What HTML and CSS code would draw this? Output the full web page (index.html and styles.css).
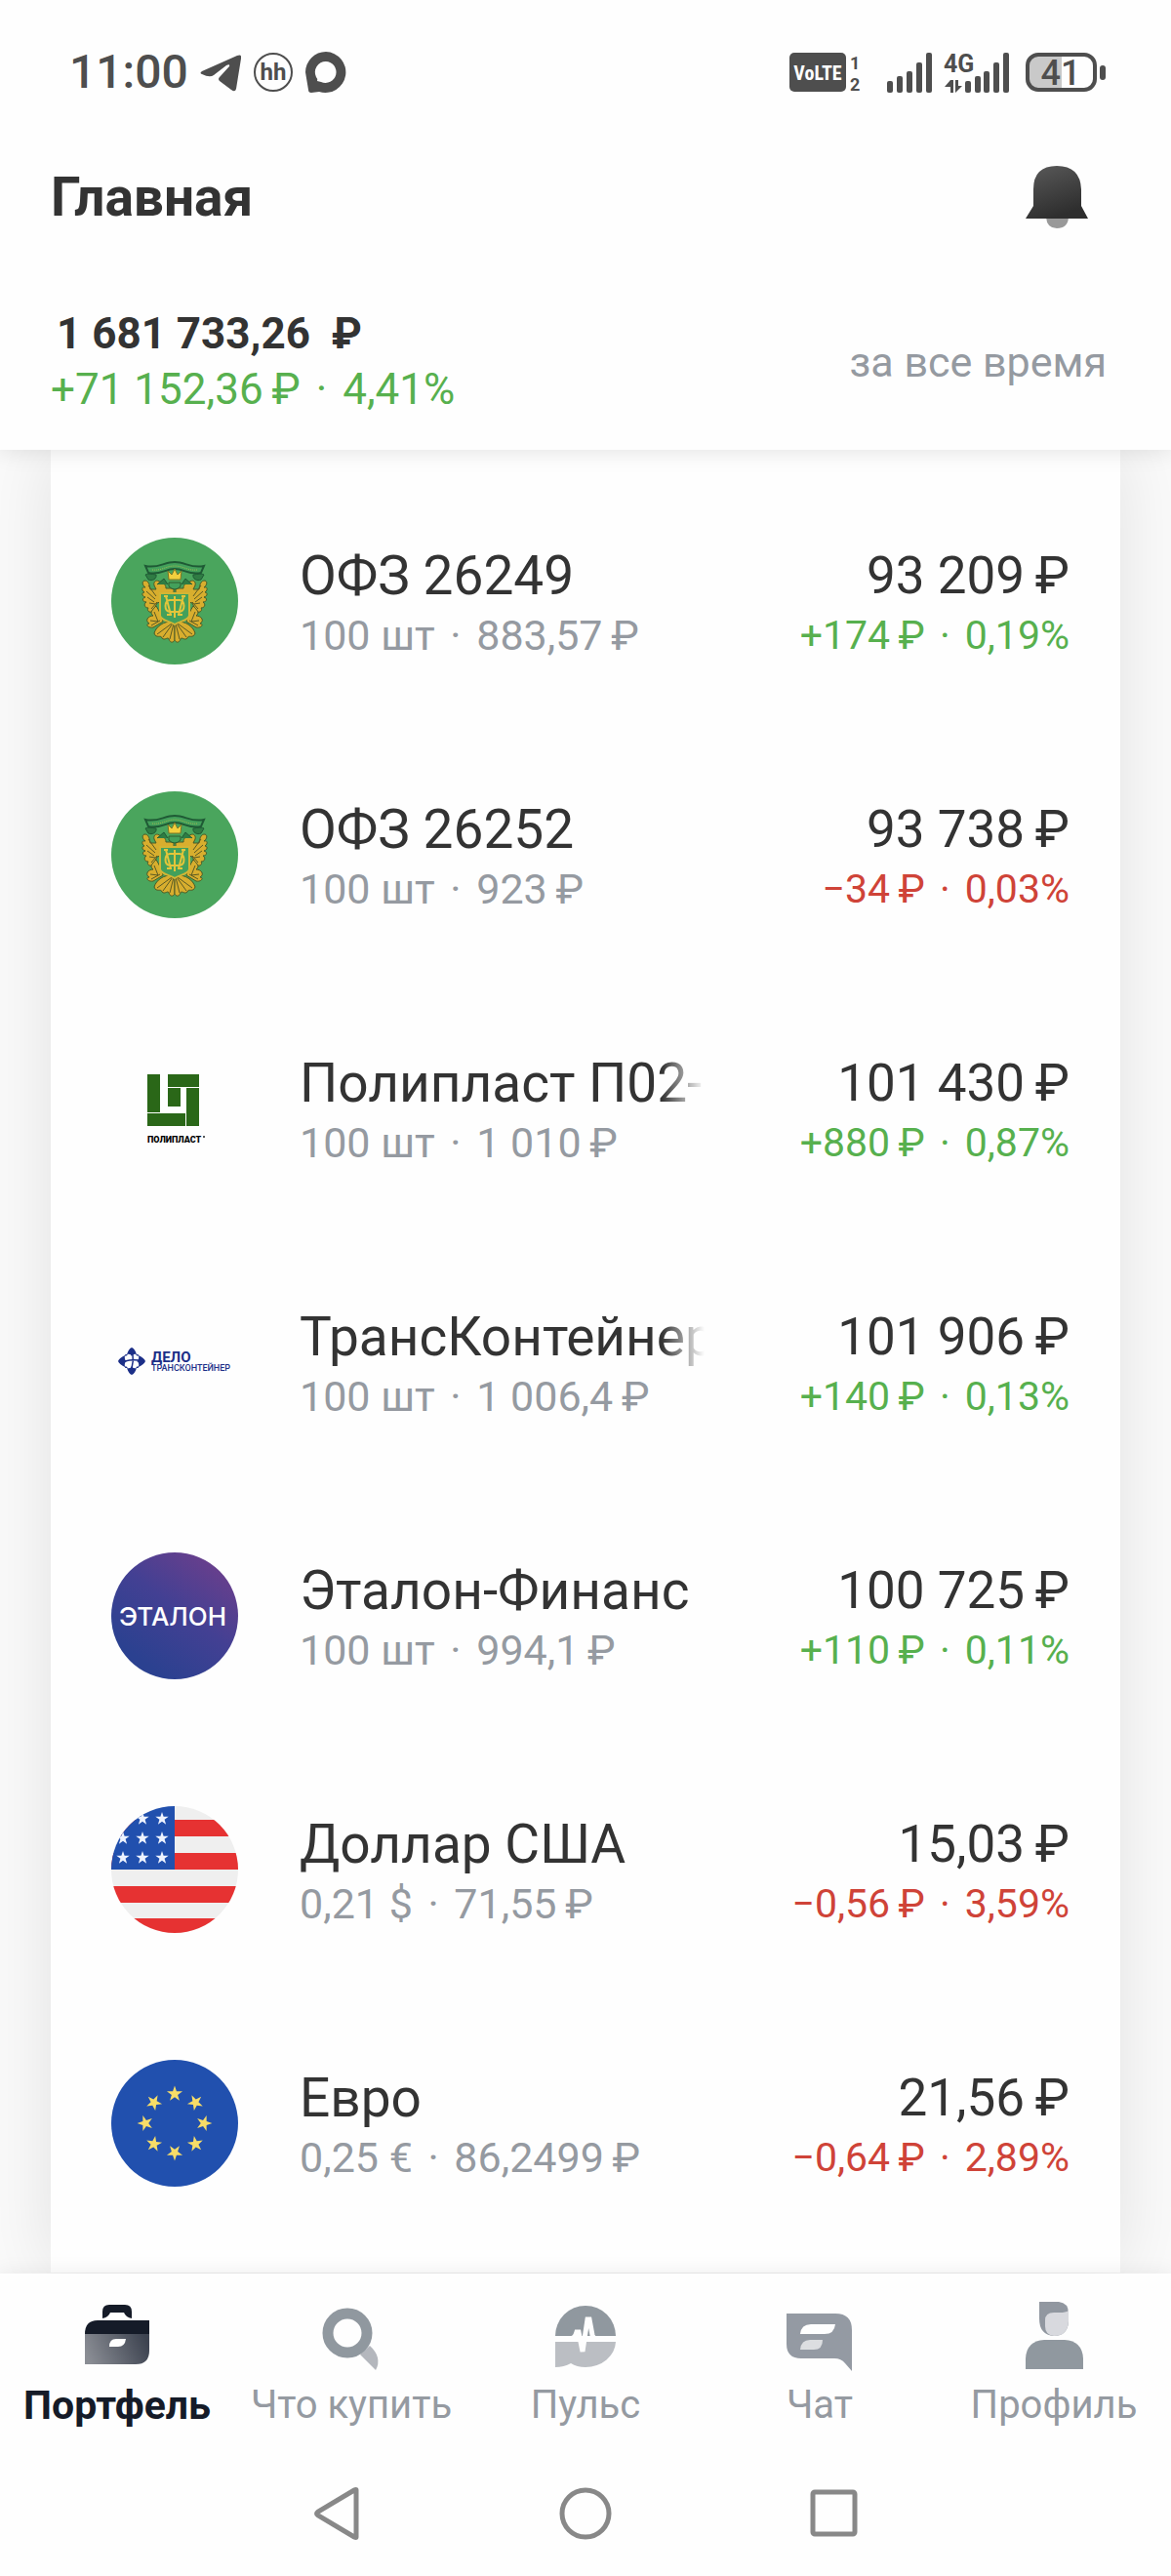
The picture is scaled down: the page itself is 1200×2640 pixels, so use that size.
FILE: index.html
```html
<!DOCTYPE html>
<html lang="ru">
<head>
    <meta charset="UTF-8">
    <meta name="viewport" content="width=device-width, initial-scale=1.0">
    <title>Главная</title>
    <link rel="stylesheet" href="styles.css">
</head>
<body>

    <!-- Общие фигуры для логотипов -->
    <svg class="defs" width="0" height="0" aria-hidden="true">
        <defs>
            <path id="star" d="M0-7 L1.6-2.2 L6.7-2.2 L2.6 0.8 L4.1 5.7 L0 2.7 L-4.1 5.7 L-2.6 0.8 L-6.7-2.2 L-1.6-2.2Z"/>
            <g id="wing">
                <path d="M51 46 C46 42 43 45 44 49 L46 53 L40 53 C39 47 38 44 34 44 C31 45 32 49 35 51 C31 50 31 54 34 56 C31 56 31 60 35 61 C31 62 32 66 36 66 C33 68 34 72 38 72 C36 75 40 78 43 75 L47 67 L50 66 L50 58 L64 57 L64 52 L56 52 C56 48 54 47 51 46Z" fill="#d8ae2e" stroke="#4a5a26" stroke-width="1"/>
                <path d="M38 49 L46 60 M36 55 L45 63 M37 61 L44 66 M39 67 L45 68 M41 73 L47 66" stroke="#5b5a24" stroke-width="1" fill="none"/>
                <path d="M46 70 C42 74 39 77 43 80 C38 80 34 85 39 88 C35 88 37 93 43 92 L53 86 C52 80 49 75 46 70Z" fill="#d8ae2e" stroke="#4a5a26" stroke-width="1"/>
                <path d="M44 76 L48 86 M40 85 L48 86 M41 90 L50 85" stroke="#5b5a24" stroke-width="1" fill="none"/>
                <path d="M64 86 C54 85 46 91 44 98 C46 104 51 99 52 103 C55 106 58 101 59 104 C61 109 64 107 65 105 V86Z" fill="#d8ae2e" stroke="#4a5a26" stroke-width="1"/>
                <path d="M62 88 L47 99 M63 88 L53 102 M64 88 L60 104" stroke="#5b5a24" stroke-width="1" fill="none"/>
                <path d="M35 38 C38 36 44 38 46 38 C47 42 42 45 38 43Z M47 48 L54 42 L58 48" fill="#2f7c43" stroke="#1f5a35" stroke-width="1"/>
            </g>
            <g id="emblem">
                <circle cx="65" cy="65" r="65" fill="#4aa55d"/>
                <use href="#wing"/>
                <use href="#wing" transform="matrix(-1 0 0 1 130 0)"/>
                <path d="M35 29 C48 32 54 25 65 25 C76 25 82 32 95 29 L92 36 C80 39 75 32 65 32 C55 32 50 39 38 36Z" fill="#43a05b" stroke="#1f5a35" stroke-width="2"/>
                <path d="M42 33 C52 34 56 29 65 29 C74 29 78 34 88 33" fill="none" stroke="#9fb850" stroke-width="1" stroke-dasharray="1 1"/>
                <path d="M59 43 L58 34 L62 38 L65 32 L68 38 L72 34 L71 43Z" fill="#f2cf3e" stroke="#7c7424" stroke-width="1"/>
                <path d="M59 46 H71 V50 Q65 56 59 50Z" fill="#43a05b" stroke="#2f5b2c"/>
                <path d="M50 57 H80 V80 C78 86 70 85 65 89 C60 85 52 86 50 80Z" fill="#43a05b" stroke="#d3b534" stroke-width="2"/>
                <path d="M56 60 L61 79 M74 60 L69 79 M54 60 H58 M72 60 H76 M65 60 V82 M60 64 C54 65 54 75 60 76 H70 C76 75 76 65 70 64Z M57 79 H62 M68 79 H73" fill="none" stroke="#e3c53a" stroke-width="2"/>
            </g>
        </defs>
    </svg>

    <header class="header">
        <div class="status">
            <div class="status-left">
                <span class="time">11:00</span>
                <svg width="42" height="42" viewBox="0 0 42 42">
                    <path d="M2 20 L38 4 Q43 2 42 7 L37 38 Q36 42 32 39 L20 30 Q18 28 20 26 L30 15 Q31 12 27 14 L14 24 Q10 27 2 23 Q-1 22 2 20Z" fill="#4e4e4e"/>
                </svg>
                <svg width="42" height="42" viewBox="0 0 42 42">
                    <circle cx="21" cy="21" r="19" fill="none" stroke="#4e4e4e" stroke-width="2"/>
                    <text class="hh" x="21" y="29" text-anchor="middle">hh</text>
                </svg>
                <svg width="42" height="42" viewBox="0 0 42 42">
                    <path d="M21 0 A21 21 0 1 1 14 41 L6 42 Q3 42 3 39 L0 21 A21 21 0 0 1 21 0Z" fill="#4e4e4e"/>
                    <path d="M21 10 A11 11 0 1 1 16 31 L12 30 Q13 28 11 26 A11 11 0 0 1 21 10Z" fill="#fefefe"/>
                </svg>
            </div>
            <svg width="326" height="44" viewBox="0 0 326 44">
                <g fill="#4e4e4e">
                    <rect x="0" y="2" width="58" height="40" rx="5"/>
                    <text class="volte" x="29" y="30" text-anchor="middle">VoLTE</text>
                    <text class="sim" x="62" y="19">1</text>
                    <text class="sim" x="62" y="41">2</text>
                    <rect x="100" y="31" width="6" height="12" rx="2"/>
                    <rect x="110" y="26" width="6" height="17" rx="2"/>
                    <rect x="120" y="21" width="6" height="22" rx="2"/>
                    <rect x="130" y="12" width="6" height="31" rx="2"/>
                    <rect x="140" y="2" width="6" height="41" rx="2"/>
                    <text class="net" x="158" y="22">4G</text>
                    <path d="M165 30 V43 H168 V30Z M165 30 L159 37 H166Z M170 30 V43 L177 36 H173 V30Z"/>
                    <rect x="180" y="31" width="6" height="12" rx="2"/>
                    <rect x="190" y="26" width="6" height="17" rx="2"/>
                    <rect x="199" y="21" width="6" height="22" rx="2"/>
                    <rect x="209" y="12" width="6" height="31" rx="2"/>
                    <rect x="219" y="2" width="6" height="41" rx="2"/>
                    <path d="M254 5 H279 V39 H254 Q245 39 245 30 V14 Q245 5 254 5Z" fill="#c9c9c9"/>
                    <rect x="244" y="4" width="69" height="36" rx="11" fill="none" stroke="#4e4e4e" stroke-width="4"/>
                    <rect x="318" y="15" width="6" height="15" rx="3"/>
                    <text class="charge" x="278" y="35" text-anchor="middle">41</text>
                </g>
            </svg>
        </div>

        <div class="title-row">
            <h1>Главная</h1>
            <button class="bell" type="button" aria-label="Уведомления">
                <svg width="64" height="64" viewBox="0 0 64 64">
                    <defs>
                        <linearGradient id="bellFill" x1="0" y1="0" x2="0.4" y2="1">
                            <stop offset="0" stop-color="#5a5a5a"/>
                            <stop offset="1" stop-color="#2e2e2e"/>
                        </linearGradient>
                    </defs>
                    <path d="M21 53 H44 Q43 64 32 64 Q22 64 21 53Z" fill="#999"/>
                    <path d="M8 24 Q8 0 32 0 Q56 0 57 24 V41 L64 54 H0 L8 41Z" fill="url(#bellFill)"/>
                </svg>
            </button>
        </div>

        <div class="summary">
            <div>
                <p class="total">1 681 733,26 &nbsp;₽</p>
                <p class="total-change up">+71 152,36&thinsp;₽ <span class="dot">·</span> 4,41%</p>
            </div>
            <button class="period" type="button">за все время</button>
        </div>
    </header>

    <main>
        <ul class="assets">
            <li class="asset">
                <svg class="logo" viewBox="0 0 130 130"><use href="#emblem"/></svg>
                <div class="info">
                    <p class="name">ОФЗ 26249</p>
                    <p class="details">100 шт <span class="dot">·</span> 883,57&thinsp;₽</p>
                </div>
                <div class="value">
                    <p class="amount">93 209&thinsp;₽</p>
                    <p class="change up">+174&thinsp;₽ <span class="dot">·</span> 0,19%</p>
                </div>
            </li>
            <li class="asset">
                <svg class="logo" viewBox="0 0 130 130"><use href="#emblem"/></svg>
                <div class="info">
                    <p class="name">ОФЗ 26252</p>
                    <p class="details">100 шт <span class="dot">·</span> 923&thinsp;₽</p>
                </div>
                <div class="value">
                    <p class="amount">93 738&thinsp;₽</p>
                    <p class="change down">−34&thinsp;₽ <span class="dot">·</span> 0,03%</p>
                </div>
            </li>
            <li class="asset">
                <svg class="logo" viewBox="0 0 130 130">
                    <path d="M37 30 H50 V69 H37Z M58 30 H90 V43 H58Z M58 44 H71 V63 H58Z M77 44 H90 V83 H77Z M37 70 H76 V83 H37Z" fill="#2a6718"/>
                    <text class="logo-poly" x="37" y="100">ПОЛИПЛАСТ</text>
                    <circle cx="95" cy="94" r="1" fill="#222"/>
                </svg>
                <div class="info">
                    <p class="name long">Полипласт П02-Б</p>
                    <p class="details">100 шт <span class="dot">·</span> 1 010&thinsp;₽</p>
                </div>
                <div class="value">
                    <p class="amount">101 430&thinsp;₽</p>
                    <p class="change up">+880&thinsp;₽ <span class="dot">·</span> 0,87%</p>
                </div>
            </li>
            <li class="asset">
                <svg class="logo" viewBox="0 0 130 130">
                    <g transform="translate(21 64)" fill="#1c2f88">
                        <path d="M0-14 Q3-13 5-7 Q1-8 0-5 Q-1-8-5-7 Q-3-13 0-14Z"/>
                        <path d="M0 14 Q3 13 5 7 Q1 8 0 5 Q-1 8-5 7 Q-3 13 0 14Z"/>
                        <path d="M-14 0 Q-13-3-7-6 Q-8-1-5 0 Q-8 1-7 6 Q-13 3-14 0Z"/>
                        <path d="M14 0 Q13-3 7-6 Q8-1 5 0 Q8 1 7 6 Q13 3 14 0Z"/>
                        <path d="M-7-6 Q-5-6-5-7 M7-6 Q5-6 5-7 M-7 6 Q-5 6-5 7 M7 6 Q5 6 5 7 M1-7 Q2 0 0 7 M-7 0 Q0-2 7-1" fill="none" stroke="#1c2f88" stroke-width="1.5"/>
                    </g>
                    <text class="logo-delo" x="41" y="65">ДЕЛО</text>
                    <text class="logo-trans" x="41" y="74">ТРАНСКОНТЕЙНЕР</text>
                </svg>
                <div class="info">
                    <p class="name long">ТрансКонтейнер</p>
                    <p class="details">100 шт <span class="dot">·</span> 1 006,4&thinsp;₽</p>
                </div>
                <div class="value">
                    <p class="amount">101 906&thinsp;₽</p>
                    <p class="change up">+140&thinsp;₽ <span class="dot">·</span> 0,13%</p>
                </div>
            </li>
            <li class="asset">
                <svg class="logo" viewBox="0 0 130 130">
                    <defs>
                        <linearGradient id="etalonFill" x1="0.9" y1="0.1" x2="0.3" y2="0.9">
                            <stop offset="0" stop-color="#6b3f8c"/>
                            <stop offset="0.5" stop-color="#434093"/>
                            <stop offset="1" stop-color="#2b4190"/>
                        </linearGradient>
                    </defs>
                    <circle cx="65" cy="65" r="65" fill="url(#etalonFill)"/>
                    <text class="logo-etalon" x="63" y="75" text-anchor="middle">ЭТАЛОН</text>
                </svg>
                <div class="info">
                    <p class="name">Эталон-Финанс</p>
                    <p class="details">100 шт <span class="dot">·</span> 994,1&thinsp;₽</p>
                </div>
                <div class="value">
                    <p class="amount">100 725&thinsp;₽</p>
                    <p class="change up">+110&thinsp;₽ <span class="dot">·</span> 0,11%</p>
                </div>
            </li>
            <li class="asset">
                <svg class="logo round" viewBox="0 0 130 130">
                    <rect width="130" height="130" fill="#efefef"/>
                    <path d="M0 14 H130 V31 H0Z M0 48 H130 V65 H0Z M0 82 H130 V99 H0Z M0 115 H130 V130 H0Z" fill="#e63232"/>
                    <rect width="65" height="65" fill="#2150ae"/>
                    <g fill="#eef3ff">
                        <use href="#star" x="32" y="13"/>
                        <use href="#star" x="52" y="13"/>
                        <use href="#star" x="12" y="33"/>
                        <use href="#star" x="32" y="33"/>
                        <use href="#star" x="52" y="33"/>
                        <use href="#star" x="12" y="53"/>
                        <use href="#star" x="32" y="53"/>
                        <use href="#star" x="52" y="53"/>
                    </g>
                </svg>
                <div class="info">
                    <p class="name">Доллар США</p>
                    <p class="details">0,21 $ <span class="dot">·</span> 71,55&thinsp;₽</p>
                </div>
                <div class="value">
                    <p class="amount">15,03&thinsp;₽</p>
                    <p class="change down">−0,56&thinsp;₽ <span class="dot">·</span> 3,59%</p>
                </div>
            </li>
            <li class="asset">
                <svg class="logo" viewBox="0 0 130 130">
                    <circle cx="65" cy="65" r="65" fill="#2150ae"/>
                    <g fill="#f8dd67" transform="translate(65 65)">
                        <use href="#star" transform="translate(0 -30) scale(1.2)"/>
                        <use href="#star" transform="rotate(45) translate(0 -30) scale(1.2)"/>
                        <use href="#star" transform="rotate(90) translate(0 -30) scale(1.2)"/>
                        <use href="#star" transform="rotate(135) translate(0 -30) scale(1.2)"/>
                        <use href="#star" transform="rotate(180) translate(0 -30) scale(1.2)"/>
                        <use href="#star" transform="rotate(225) translate(0 -30) scale(1.2)"/>
                        <use href="#star" transform="rotate(270) translate(0 -30) scale(1.2)"/>
                        <use href="#star" transform="rotate(315) translate(0 -30) scale(1.2)"/>
                    </g>
                </svg>
                <div class="info">
                    <p class="name">Евро</p>
                    <p class="details">0,25 € <span class="dot">·</span> 86,2499&thinsp;₽</p>
                </div>
                <div class="value">
                    <p class="amount">21,56&thinsp;₽</p>
                    <p class="change down">−0,64&thinsp;₽ <span class="dot">·</span> 2,89%</p>
                </div>
            </li>
        </ul>
    </main>

    <footer class="bottom">
        <nav class="tabs">
            <a class="tab active" href="#portfolio">
                <svg viewBox="0 0 80 80">
                    <defs>
                        <linearGradient id="caseFill" x1="0" y1="0.6" x2="1" y2="0.4">
                            <stop offset="0" stop-color="#8a8d94"/>
                            <stop offset="1" stop-color="#3d4350"/>
                        </linearGradient>
                    </defs>
                    <path d="M25 26 V19 Q25 12 32 12 H48 Q55 12 55 19 V26 Q49 25 47 20 H33 Q31 25 25 26Z" fill="#151b28"/>
                    <path d="M7 42 Q7 28 20 28 H73 V42Z" fill="#151b28"/>
                    <path d="M7 42 H73 V59 Q73 73 59 73 H7Z" fill="url(#caseFill)"/>
                    <path d="M32 55 Q32 47 39 47 H49 Q48 55 41 55Z" fill="#fefefe"/>
                </svg>
                Портфель
            </a>
            <a class="tab" href="#buy">
                <svg viewBox="0 0 80 80">
                    <path d="M49 63 L59 54 Q72 66 65 79Z" fill="#b4b7bd"/>
                    <circle cx="36" cy="41" r="20" fill="none" stroke="#90989f" stroke-width="11"/>
                </svg>
                Что купить
            </a>
            <a class="tab" href="#pulse">
                <svg viewBox="0 0 80 80">
                    <path d="M9 44 A31 31 0 0 1 71 44Z" fill="#90989f"/>
                    <path d="M9 50 H71 A31 27 0 0 1 40 76 Q31 76 25 72 Q18 76 9 76Z" fill="#bbbec3"/>
                    <path d="M9 47 H24 Q29 47 31 40 L33 40 L37 60 L42 27 L44 27 L47 43 Q48 47 52 47 H71" fill="none" stroke="#fefefe" stroke-width="5"/>
                </svg>
                Пульс
            </a>
            <a class="tab" href="#chat">
                <svg viewBox="0 0 80 80">
                    <path d="M6 21 H56 Q73 21 73 38 V80 L66 72 Q62 67 55 67 H21 Q6 67 6 52Z" fill="#949aa3"/>
                    <path d="M20 42 Q21 32 31 32 H56 Q55 42 45 42Z" fill="#fefefe"/>
                    <path d="M20 58 Q21 48 30 48 H43 Q43 58 34 58Z" fill="#dcdee1"/>
                </svg>
                Чат
            </a>
            <a class="tab" href="#profile">
                <svg viewBox="0 0 80 80">
                    <path d="M25 9 H45 Q55 10 55 21 V29 Q54 44 40 44 Q25 43 25 26Z" fill="#9197a0"/>
                    <path d="M55 18 V29 Q54 44 40 44 Q31 43 31 34 V28 Q31 20 40 20 H46 Q52 20 55 18Z" fill="#d8d9de"/>
                    <path d="M11 78 V67 Q12 49 30 48 H51 Q69 49 70 67 V78Z" fill="#90989f"/>
                </svg>
                Профиль
            </a>
        </nav>

        <!-- Системные кнопки -->
        <div class="system">
            <button type="button" aria-label="Назад">
                <svg width="60" height="60" viewBox="0 0 60 60"><path d="M50 6 V54 Q50 55 48 54 L11 32 Q8 30 11 28 L48 6 Q50 5 50 6Z"/></svg>
            </button>
            <button type="button" aria-label="Домой">
                <svg width="60" height="60" viewBox="0 0 60 60"><circle cx="30" cy="30" r="24"/></svg>
            </button>
            <button type="button" aria-label="Недавние">
                <svg width="60" height="60" viewBox="0 0 60 60"><rect x="8" y="8" width="43" height="43" rx="2"/></svg>
            </button>
        </div>
    </footer>

</body>
</html>
```
FILE: styles.css
```css
/* Базовые стили */
* {
    box-sizing: border-box;
}

body {
    display: flex;
    flex-direction: column;
    min-height: 100vh;
    margin: 0;
    background-color: #fafafa;
    color: #333;
    font-family: Roboto, "Noto Sans", sans-serif;
}

h1, p, ul {
    margin: 0;
    padding: 0;
}

button {
    padding: 0;
    border: none;
    background: none;
    font-family: inherit;
    cursor: pointer;
}

svg {
    display: block;
    flex-shrink: 0;
}

.defs {
    position: absolute;
}

.up {
    color: #57b04e;
}

.down {
    color: #cf4338;
}

.dot {
    margin: 0 5px;
}

/* Шапка */
.header {
    position: relative;
    z-index: 1;
    background-color: #fefefe;
    box-shadow: 0 0 24px rgba(0, 0, 0, 0.12);
}

.status {
    display: flex;
    align-items: center;
    justify-content: space-between;
    height: 148px;
    padding: 0 65px 0 71px;
}

.status-left {
    display: flex;
    align-items: center;
    gap: 12px;
}

.time {
    color: #4e4e4e;
    font-size: 48px;
    font-weight: 500;
    line-height: 56px;
}

.hh {
    fill: #4e4e4e;
    font-size: 24px;
    font-weight: 700;
}

.volte {
    fill: #fefefe;
    font-family: "Roboto Condensed", "Liberation Sans Narrow", Roboto, sans-serif;
    font-size: 20px;
    font-weight: 700;
}

.sim {
    font-size: 18px;
    font-weight: 700;
}

.net {
    font-size: 25px;
    font-weight: 700;
}

.charge {
    font-size: 36px;
    font-weight: 500;
}

.title-row {
    display: flex;
    align-items: center;
    justify-content: space-between;
    height: 108px;
    padding: 0 85px 0 52px;
}

h1 {
    font-size: 55px;
    font-weight: 700;
    line-height: 70px;
}

.summary {
    display: flex;
    align-items: center;
    justify-content: space-between;
    padding: 58px 66px 33px 52px;
}

.total,
.total-change {
    font-size: 44px;
    line-height: 57px;
}

.total {
    padding-left: 6px;
    font-weight: 700;
}

.period {
    color: #959aa1;
    font-size: 43px;
    line-height: 52px;
}

/* Список активов */
main {
    flex: 1;
    padding: 0 52px;
}

.assets {
    height: 100%;
    padding: 25px 0 23px;
    background-color: #fefefe;
    box-shadow: 0 0 70px rgba(0, 0, 0, 0.1);
    list-style: none;
}

.asset {
    display: grid;
    grid-template-columns: 130px minmax(0, 4fr) minmax(0, 3fr);
    column-gap: 63px;
    align-items: center;
    height: 260px;
    padding: 0 52px 0 62px;
}

.logo {
    width: 130px;
    height: 130px;
}

.round {
    border-radius: 50%;
}

.name,
.amount {
    line-height: 70px;
    white-space: nowrap;
}

.name {
    font-size: 55px;
}

.amount {
    font-size: 53px;
}

/* Длинное название плавно исчезает справа */
.long {
    overflow: hidden;
    -webkit-mask-image: linear-gradient(to left, transparent, #000 44px);
    mask-image: linear-gradient(to left, transparent, #000 44px);
}

.details,
.change {
    line-height: 52px;
    white-space: nowrap;
}

.details {
    color: #959aa1;
    font-size: 43px;
}

.value {
    text-align: right;
}

.change {
    font-size: 41px;
}

/* Логотипы */
.logo-poly {
    font-size: 9px;
    font-weight: 900;
}

.logo-delo {
    fill: #1c2f88;
    font-size: 15px;
    font-weight: 700;
}

.logo-trans {
    fill: #1c2f88;
    font-size: 9px;
    font-weight: 500;
}

.logo-etalon {
    fill: #fff;
    font-family: Inter, Roboto, sans-serif;
    font-size: 26px;
    font-weight: 500;
}

/* Нижнее меню */
.bottom {
    position: relative;
    z-index: 1;
    background-color: #fefefe;
    box-shadow: 0 0 20px rgba(0, 0, 0, 0.08);
}

.tabs {
    display: grid;
    grid-template-columns: repeat(5, 1fr);
    padding: 20px 0;
}

.tab {
    display: flex;
    flex-direction: column;
    align-items: center;
    gap: 8px;
    color: #959aa1;
    font-size: 40px;
    line-height: 54px;
    text-decoration: none;
    white-space: nowrap;
}

.tab svg {
    width: 80px;
    height: 80px;
}

.tab.active {
    color: #151b28;
    font-size: 41px;
    font-weight: 700;
}

.system {
    display: flex;
    align-items: center;
    justify-content: center;
    gap: 195px;
    height: 128px;
}

.system svg {
    fill: none;
    stroke: #888;
    stroke-width: 5;
}
```
